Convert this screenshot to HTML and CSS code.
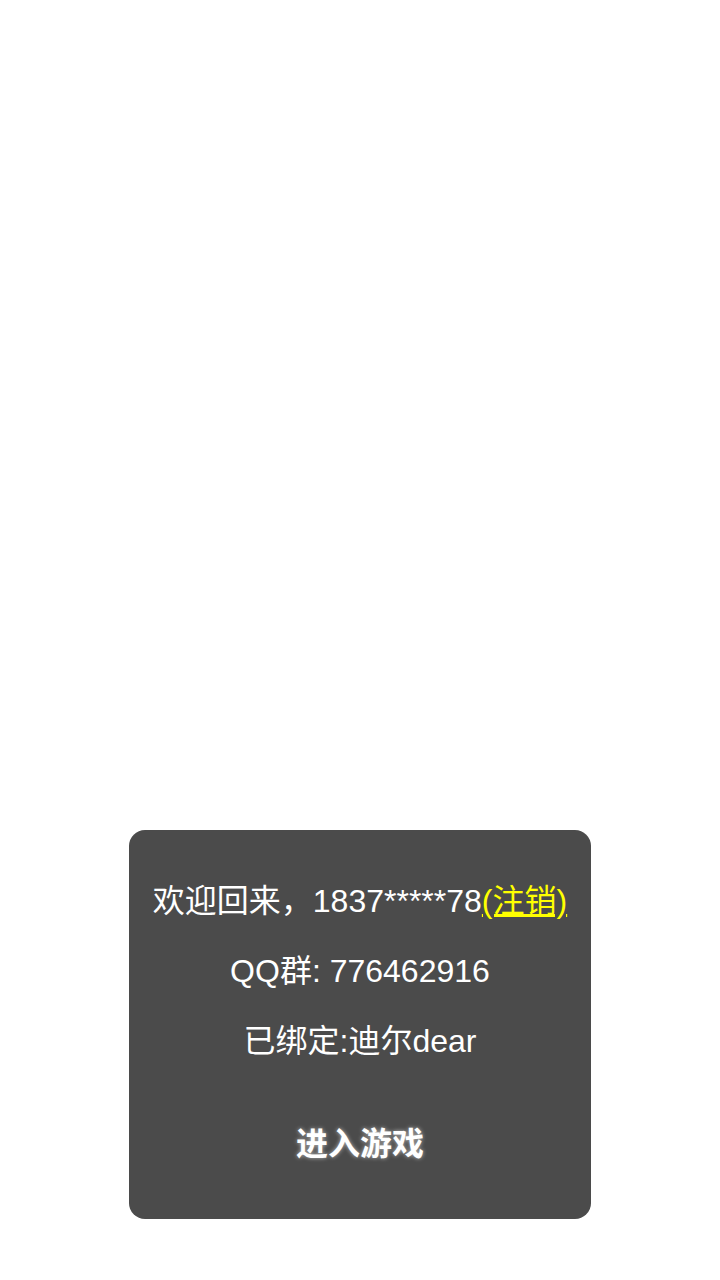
FILE: index.html
```html
<!DOCTYPE html>
<html lang="zh-CN">
<head>
  <meta charset="UTF-8" />
  <meta name="viewport" content="width=device-width, initial-scale=1.0" />
  <title>登录</title>
  <link rel="stylesheet" href="styles.css">
</head>
<body>
  <div class="page">
    <div class="panel">
      <div class="info">
        <p class="line">欢迎回来，1837*****78<a class="logout" href="#">(注销)</a></p>
        <p class="line">QQ群: 776462916</p>
        <p class="line">已绑定:迪尔dear</p>
      </div>
      <button type="button" class="enter-btn">进入游戏</button>
    </div>
  </div>
</body>
</html>
```

FILE: styles.css
```css
html, body {
  margin: 0;
  padding: 0;
  height: 100%;
  background: #fff;
}

body {
  font-family: "Liberation Sans", "Noto Sans CJK SC", sans-serif;
}

.page {
  height: 100%;
  display: flex;
  flex-direction: column;
  justify-content: flex-end;
  align-items: center;
  padding-bottom: 61px;
  box-sizing: border-box;
}

.panel {
  width: 462px;
  height: 389px;
  box-sizing: border-box;
  background: #4b4b4b;
  border-radius: 16px;
  padding-top: 36px;
  display: flex;
  flex-direction: column;
  align-items: center;
}

.info {
  display: flex;
  flex-direction: column;
  align-items: center;
}

.line {
  margin: 0;
  height: 70px;
  line-height: 70px;
  font-size: 32px;
  color: #fff;
  white-space: nowrap;
}

.logout {
  color: #ffff00;
  text-decoration: underline;
}

.enter-btn {
  margin-top: 42px;
  background: none;
  border: none;
  padding: 0;
  font-family: inherit;
  font-size: 32px;
  font-weight: bold;
  color: #fff;
  text-shadow: 0 0 4px rgba(255, 255, 255, 0.6);
  cursor: pointer;
}
```
